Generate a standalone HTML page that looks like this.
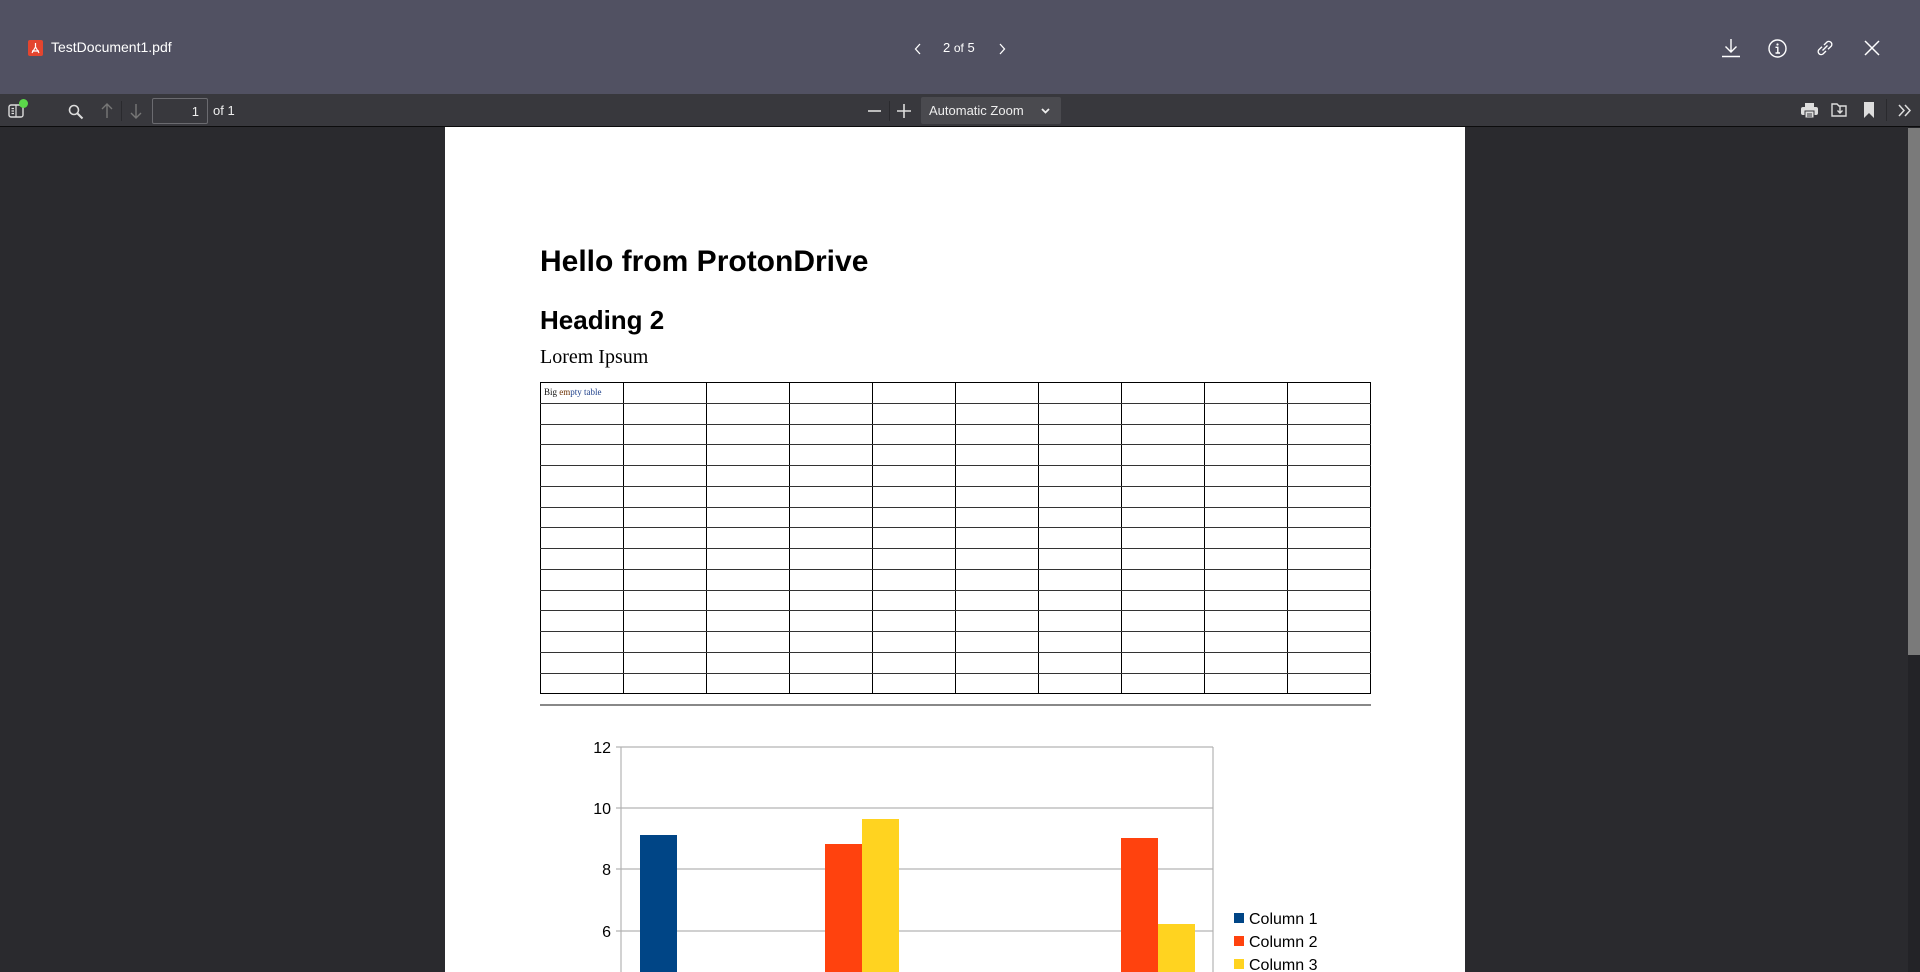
<!DOCTYPE html>
<html><head><meta charset="utf-8"><style>
*{margin:0;padding:0;box-sizing:border-box}
body{width:1920px;height:972px;overflow:hidden;background:#2a2a2e;font-family:"Liberation Sans",sans-serif;position:relative}
.abs{position:absolute}
#hdr{left:0;top:0;width:1920px;height:94px;background:#515162}
#tb{left:0;top:94px;width:1920px;height:33px;background:#38383d;border-bottom:1px solid #0c0c0d}
.w{color:#fff}
svg{position:absolute;overflow:visible}
#page{left:445px;top:127px;width:1020px;height:845px;background:#fff}
</style></head><body>
<div id="hdr" class="abs">
  <div class="abs" style="left:28px;top:40px;width:15px;height:16px;background:#e4452f;border-radius:2px"></div>
  <svg style="left:28px;top:40px" width="15" height="16"><path d="M7.5 3 L7.5 7 M7.5 7 L4 13 M7.5 7 L11 13 M4 11 L11 11" stroke="#fff" stroke-width="1.2" fill="none"/></svg>
  <div class="abs w" style="left:51px;top:39px;font-size:14px">TestDocument1.pdf</div>
  <svg style="left:914px;top:43px" width="8" height="12"><path d="M6 1 L1.5 6 L6 11" stroke="#fff" stroke-width="1.3" fill="none"/></svg>
  <div class="abs w" style="left:943px;top:40px;font-size:13px">2 <span style="font-size:12px">of</span> 5</div>
  <svg style="left:998px;top:43px" width="8" height="12"><path d="M2 1 L6.5 6 L2 11" stroke="#fff" stroke-width="1.3" fill="none"/></svg>
  <svg style="left:1722px;top:38px" width="18" height="20"><path d="M9 1 V14 M3.5 8.5 L9 14 L14.5 8.5 M0 18.5 H18" stroke="#fff" stroke-width="1.4" fill="none"/></svg>
  <svg style="left:1768px;top:39px" width="19" height="19"><circle cx="9.5" cy="9.5" r="8.5" stroke="#fff" stroke-width="1.4" fill="none"/><circle cx="9.5" cy="5.5" r="1.1" fill="#fff"/><path d="M7.5 8.3 H9.8 V14 M7.5 14 H12" stroke="#fff" stroke-width="1.4" fill="none"/></svg>
  <svg style="left:1816px;top:39px" width="18" height="18"><path d="M8 6 L11 3 A3 3 0 0 1 15.2 7.2 L12 10.3 M10 12 L7 15 A3 3 0 0 1 2.8 10.8 L6 7.7 M6.5 11.5 L11.5 6.5" stroke="#fff" stroke-width="1.4" fill="none"/></svg>
  <svg style="left:1864px;top:40px" width="16" height="16"><path d="M1 1 L15 15 M15 1 L1 15" stroke="#fff" stroke-width="1.5"/></svg>
</div>
<div id="tb" class="abs">
  <svg style="left:8px;top:10px" width="16" height="14"><rect x="1" y="1" width="14" height="12" rx="2" stroke="#ddd" stroke-width="1.4" fill="none"/><path d="M8 1 V13 M3.5 4.5 H6 M3.5 7 H6 M3.5 9.5 H6" stroke="#ddd" stroke-width="1.2"/></svg>
  <div class="abs" style="left:19px;top:5px;width:9px;height:9px;border-radius:50%;background:#5bd94a"></div>
  <svg style="left:68px;top:10px" width="16" height="16"><circle cx="6" cy="6" r="4.5" stroke="#ddd" stroke-width="1.6" fill="none"/><path d="M9.5 9.5 L14.5 14.5" stroke="#ddd" stroke-width="2"/></svg>
  <svg style="left:101px;top:9px" width="12" height="16"><path d="M6 1 V15 M1 6 L6 1 L11 6" stroke="#777" stroke-width="1.4" fill="none"/></svg>
  <div class="abs" style="left:121px;top:7px;width:1px;height:20px;background:#2a2a2e"></div>
  <svg style="left:130px;top:9px" width="12" height="16"><path d="M6 1 V15 M1 10 L6 15 L11 10" stroke="#777" stroke-width="1.4" fill="none"/></svg>
  <div class="abs" style="left:152px;top:4px;width:56px;height:26px;border:1px solid #6b6b70;border-radius:2px;background:#38383d;color:#eee;font-size:13px;text-align:right;padding:5px 8px 0 0">1</div>
  <div class="abs" style="left:213px;top:9px;color:#eee;font-size:13px">of 1</div>
  <svg style="left:868px;top:16px" width="13" height="2"><path d="M0 1 H13" stroke="#ddd" stroke-width="1.6"/></svg>
  <div class="abs" style="left:889px;top:7px;width:1px;height:20px;background:#2a2a2e"></div>
  <svg style="left:897px;top:10px" width="14" height="14"><path d="M0 7 H14 M7 0 V14" stroke="#ddd" stroke-width="1.6"/></svg>
  <div class="abs" style="left:921px;top:3px;width:140px;height:27px;background:#4a4a4f;border-radius:2px;color:#eee;font-size:13px;padding:6px 0 0 8px">Automatic Zoom</div>
  <svg style="left:1041px;top:14px" width="9" height="6"><path d="M1 1 L4.5 4.5 L8 1" stroke="#eee" stroke-width="1.8" fill="none"/></svg>
  <svg style="left:1801px;top:8px" width="17" height="17"><rect x="4" y="1" width="9" height="4" fill="#ddd"/><rect x="0" y="5" width="17" height="8" rx="2" fill="#ddd"/><rect x="4" y="9" width="9" height="7" fill="#ddd" stroke="#38383d" stroke-width="1"/><path d="M6 12 H11 M6 14 H11" stroke="#38383d"/></svg>
  <svg style="left:1831px;top:8px" width="16" height="16"><path d="M1 2 H6 L8 4 H15 V14 H1 Z" stroke="#ddd" stroke-width="1.4" fill="none"/><path d="M9 4 V11 M6.5 8.5 L9 11 L11.5 8.5" stroke="#ddd" stroke-width="1.4" fill="none"/></svg>
  <svg style="left:1864px;top:8px" width="10" height="16"><path d="M0 0 H10 V16 L5 11 L0 16 Z" fill="#ddd"/></svg>
  <div class="abs" style="left:1886px;top:5px;width:1px;height:22px;background:#2a2a2e"></div>
  <svg style="left:1898px;top:10px" width="13" height="13"><path d="M1 1 L6 6.5 L1 12 M7 1 L12 6.5 L7 12" stroke="#ddd" stroke-width="1.5" fill="none"/></svg>
</div>
<div class="abs" style="left:1908px;top:127px;width:12px;height:845px;background:#232327"></div>
<div class="abs" style="left:1908px;top:128px;width:12px;height:527px;background:#7a7a7a"></div>

<div id="page" class="abs">
  <div class="abs" style="left:95px;top:118px;font:bold 30px 'Liberation Sans',sans-serif;color:#000;white-space:nowrap">Hello from ProtonDrive</div>
  <div class="abs" style="left:95px;top:178px;font:bold 26px 'Liberation Sans',sans-serif;color:#000;white-space:nowrap">Heading 2</div>
  <div class="abs" style="left:95px;top:219px;font:20px 'Liberation Serif',serif;color:#000;white-space:nowrap">Lorem Ipsum</div>
  <svg style="left:0;top:0" width="1020" height="845">
    <g stroke="#000" stroke-width="1" fill="none">
      <rect x="95.5" y="255.5" width="830" height="311"/>
      <path d="M178.5 255 V567 M261.5 255 V567 M344.5 255 V567 M427.5 255 V567 M510.5 255 V567 M593.5 255 V567 M676.5 255 V567 M759.5 255 V567 M842.5 255 V567"/>
      <path d="M95 276.5 H926 M95 297.5 H926 M95 317.5 H926 M95 338.5 H926 M95 359.5 H926 M95 380.5 H926 M95 400.5 H926 M95 421.5 H926 M95 442.5 H926 M95 463.5 H926 M95 483.5 H926 M95 504.5 H926 M95 525.5 H926 M95 546.5 H926" stroke="#333"/>
    </g>
    <text x="99" y="268" font-family="Liberation Serif" font-size="9" fill="#111">Big <tspan fill="#6b2f00">em</tspan><tspan fill="#1d3f8a">pty table</tspan></text>
    <path d="M95 578 H926" stroke="#888" stroke-width="2"/>
    <g stroke="#b3b3b3" stroke-width="1.2">
      <path d="M176 620 H768 M176 681 H768 M176 742 H768 M176 804 H768"/>
      <path d="M176 620 V845 M768 620 V845"/>
      <path d="M171 620 H176 M171 681 H176 M171 742 H176 M171 804 H176"/>
    </g>
    <g font-family="Liberation Sans" font-size="16" fill="#000" text-anchor="end">
      <text x="166" y="626">12</text><text x="166" y="687">10</text><text x="166" y="748">8</text><text x="166" y="810">6</text>
    </g>
    <rect x="195" y="708" width="37" height="140" fill="#004586"/>
    <rect x="380" y="717" width="37" height="130" fill="#ff420e"/>
    <rect x="417" y="692" width="37" height="155" fill="#ffd320"/>
    <rect x="676" y="711" width="37" height="136" fill="#ff420e"/>
    <rect x="713" y="797" width="37" height="50" fill="#ffd320"/>
    <rect x="789" y="786" width="10" height="10" fill="#004586"/>
    <rect x="789" y="809" width="10" height="10" fill="#ff420e"/>
    <rect x="789" y="832" width="10" height="10" fill="#ffd320"/>
    <g font-family="Liberation Sans" font-size="16" fill="#000">
      <text x="804" y="797">Column 1</text><text x="804" y="820">Column 2</text><text x="804" y="843">Column 3</text>
    </g>
  </svg>
</div>
</body></html>
